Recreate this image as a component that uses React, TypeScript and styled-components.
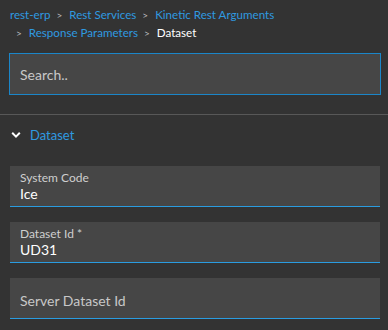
import styled, { createGlobalStyle } from 'styled-components';

const GlobalStyle = createGlobalStyle`
    html, body {
        margin: 0;
        padding: 0;
        background: #333333;
    }
    body {
        font-family: Lato, "Liberation Sans", sans-serif;
    }
`

const Page = styled.div`
    width: 388px;
    height: 330px;
    background: #333333;
    overflow: hidden;
`

const Crumbs = styled.nav`
    display: flex;
    flex-wrap: wrap;
    align-items: center;
    padding: 7px 10px 0 10px;
    row-gap: 2px;
    font-size: 11.6px;
    line-height: 16px;
    width: 300px;
`

const Step = styled.span`
    display: inline-flex;
    align-items: center;
    white-space: nowrap;
`

const Crumb = styled.span<{ current?: boolean }>`
    color: ${p => p.current ? '#ffffff' : '#2f9ae0'};
`

const Sep = styled.span`
    color: #bbbbbb;
    font-size: 10px;
    margin: 0 7px 0 6px;
`

const SearchBox = styled.div`
    margin: 12px 7px 0 9px;
    height: 40px;
    border: 1px solid #1b86c9;
    background: #464646;
    display: flex;
    align-items: center;
    padding-left: 10px;
    font-size: 14px;
    color: #c8c8c8;
`

const Divider = styled.div`
    margin-top: 19px;
    height: 1px;
    background: #585858;
`

const SectionHead = styled.div`
    display: flex;
    align-items: center;
    gap: 9px;
    padding: 12px 0 0 11px;
    height: 16px;
    font-size: 13px;
    color: #2f9ae0;
`

const Fields = styled.div`
    display: flex;
    flex-direction: column;
    gap: 15px;
    padding: 23px 8px 0 10px;
`

const Field = styled.div<{ empty?: boolean }>`
    height: 40px;
    background: #464646;
    border-bottom: 1px solid #2a9ce0;
    display: flex;
    flex-direction: column;
    justify-content: ${p => p.empty ? 'center' : 'flex-start'};
    padding-left: 10px;
`

const Label = styled.div`
    font-size: 12px;
    line-height: 14px;
    color: #cfcfcf;
    margin-top: 5px;
`

const Value = styled.div`
    font-size: 14px;
    line-height: 18px;
    color: #ffffff;
`

const Placeholder = styled.div`
    font-size: 14px;
    color: #c8c8c8;
    margin-top: 4px;
`

function Chevron() {
    return (
        <svg width="10" height="8" viewBox="0 0 10 8">
            <path d="M1.2 1.8 L5 5.6 L8.8 1.8" fill="none" stroke="#ffffff" strokeWidth="2" />
        </svg>
    )
}

const path = ['Rest Services', 'Kinetic Rest Arguments', 'Response Parameters']

export default function App() {
    return (
        <Page>
            <GlobalStyle />
            <Crumbs>
                <Step><Crumb>rest-erp</Crumb></Step>
                {path.map((p, i) => (
                    <Step key={i}>
                        <Sep>&gt;</Sep>
                        <Crumb>{p}</Crumb>
                    </Step>
                ))}
                <Step>
                    <Sep>&gt;</Sep>
                    <Crumb current>Dataset</Crumb>
                </Step>
            </Crumbs>
            <SearchBox>Search..</SearchBox>
            <Divider />
            <SectionHead>
                <Chevron />
                Dataset
            </SectionHead>
            <Fields>
                <Field>
                    <Label>System Code</Label>
                    <Value>Ice</Value>
                </Field>
                <Field>
                    <Label>Dataset Id *</Label>
                    <Value>UD31</Value>
                </Field>
                <Field empty>
                    <Placeholder>Server Dataset Id</Placeholder>
                </Field>
            </Fields>
        </Page>
    )
}
